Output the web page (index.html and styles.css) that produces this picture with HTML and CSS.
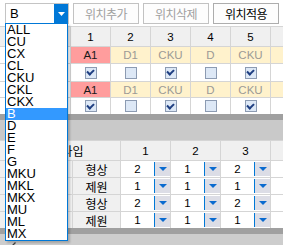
FILE: index.html
```html
<!DOCTYPE html>
<html lang="ko">
<head>
  <meta charset="UTF-8">
  <title>위치 설정</title>
  <link rel="stylesheet" href="styles.css">
</head>
<body>

  <div class="toolbar">
    <div class="combo">
      <span class="combo-text">B</span>
      <span class="combo-btn">
        <svg width="7" height="4" viewBox="0 0 7 4"><path d="M0 0h7L3.5 4z" fill="#fff"/></svg>
      </span>
    </div>
    <button class="btn" disabled>위치추가</button>
    <button class="btn" disabled>위치삭제</button>
    <button class="btn">위치적용</button>
  </div>

  <div class="grid grid-top">
    <div class="c hd"></div>
    <div class="c hd">1</div>
    <div class="c hd">2</div>
    <div class="c hd">3</div>
    <div class="c hd">4</div>
    <div class="c hd">5</div>
    <div class="c hd"></div>

    <div class="c wh"></div>
    <div class="c pink">A1</div>
    <div class="c yel">D1</div>
    <div class="c yel">CKU</div>
    <div class="c yel">D</div>
    <div class="c yel">CKU</div>
    <div class="c yel"></div>

    <div class="c wh"></div>
    <div class="c wh"><span class="chk on"></span></div>
    <div class="c wh"><span class="chk"></span></div>
    <div class="c wh"><span class="chk on"></span></div>
    <div class="c wh"><span class="chk"></span></div>
    <div class="c wh"><span class="chk on"></span></div>
    <div class="c wh"></div>

    <div class="c wh"></div>
    <div class="c pink">A1</div>
    <div class="c yel">D1</div>
    <div class="c yel">CKU</div>
    <div class="c yel">D</div>
    <div class="c yel">CKU</div>
    <div class="c yel"></div>

    <div class="c wh"></div>
    <div class="c wh"><span class="chk on"></span></div>
    <div class="c wh"><span class="chk"></span></div>
    <div class="c wh"><span class="chk on"></span></div>
    <div class="c wh"><span class="chk"></span></div>
    <div class="c wh"><span class="chk on"></span></div>
    <div class="c wh"></div>
  </div>

  <div class="bar-dark"></div>
  <div class="bar-light"></div>

  <div class="grid grid-bot">
    <div class="c hd type-head">타입</div>
    <div class="c hd">1</div>
    <div class="c hd">2</div>
    <div class="c hd">3</div>
    <div class="c hd"></div>

    <div class="c hd"></div>
    <div class="c hd ko">형상</div>
    <div class="val"><span class="num">2</span><span class="dd"></span></div>
    <div class="val"><span class="num">1</span><span class="dd"></span></div>
    <div class="val"><span class="num">2</span><span class="dd"></span></div>
    <div class="c wh"></div>

    <div class="c hd"></div>
    <div class="c hd ko">제원</div>
    <div class="val"><span class="num">1</span><span class="dd"></span></div>
    <div class="val"><span class="num">1</span><span class="dd"></span></div>
    <div class="val"><span class="num">1</span><span class="dd"></span></div>
    <div class="c wh"></div>

    <div class="c hd"></div>
    <div class="c hd ko">형상</div>
    <div class="val"><span class="num">2</span><span class="dd"></span></div>
    <div class="val"><span class="num">1</span><span class="dd"></span></div>
    <div class="val"><span class="num">2</span><span class="dd"></span></div>
    <div class="c wh"></div>

    <div class="c hd"></div>
    <div class="c hd ko">제원</div>
    <div class="val"><span class="num">1</span><span class="dd"></span></div>
    <div class="val"><span class="num">1</span><span class="dd"></span></div>
    <div class="val"><span class="num">1</span><span class="dd"></span></div>
    <div class="c wh"></div>
  </div>

  <div class="bar-dark"></div>
  <div class="scroll">
    <svg width="5" height="4" viewBox="0 0 5 4"><path d="M4.5 0.5L1 4" fill="none" stroke="#404040" stroke-width="1.3"/></svg>
  </div>

  <ul class="dropdown">
    <li>ALL</li>
    <li>CU</li>
    <li>CX</li>
    <li>CL</li>
    <li>CKU</li>
    <li>CKL</li>
    <li>CKX</li>
    <li class="sel">B</li>
    <li>D</li>
    <li>E</li>
    <li>F</li>
    <li>G</li>
    <li>MKU</li>
    <li>MKL</li>
    <li>MKX</li>
    <li>MU</li>
    <li>ML</li>
    <li>MX</li>
  </ul>

</body>
</html>
```

FILE: styles.css
```css
* {
  box-sizing: border-box;
}

body {
  margin: 0;
  width: 283px;
  height: 245px;
  overflow: hidden;
  position: relative;
  background: #fff;
  font-family: "Liberation Sans", Arial, sans-serif;
  color: #000;
}

/* top bar */
.toolbar {
  display: flex;
  align-items: flex-start;
  gap: 4px;
  height: 26px;
  padding: 3px 0 0 5px;
}

.combo {
  display: flex;
  width: 64px;
  height: 21px;
  border: 1px solid #c4c4c4;
  background: #fff;
}

.combo-text {
  flex: 1;
  font-size: 13px;
  line-height: 19px;
  padding-left: 4px;
}

.combo-btn {
  width: 14px;
  background: #0078d7;
  display: flex;
  align-items: center;
  justify-content: center;
}

.btn {
  width: 66px;
  height: 21px;
  padding: 0;
  border: 1px solid #adadad;
  background: #fdfdfd;
  font-family: "Noto Sans CJK KR", sans-serif;
  font-size: 12px;
  letter-spacing: -0.5px;
  color: #000;
}

.btn:disabled {
  color: #a0a0a0;
  border-color: #c2c2c2;
}

/* grids */
.grid {
  display: grid;
  gap: 1px;
  padding-top: 1px;
  background: #d5d5d5;
}

.grid-top {
  grid-template-columns: 70px repeat(5, 39px) 1fr;
  grid-template-rows: 19px 16px 17px 15px 16px;
}

.grid-bot {
  grid-template-columns: 72px 47px repeat(3, 49px) 1fr;
  grid-template-rows: 19px repeat(4, 16px);
}

.c {
  display: flex;
  align-items: center;
  justify-content: center;
  font-size: 11.5px;
}

.hd {
  background: #f0f0f0;
}

.wh {
  background: #fff;
}

.pink {
  background: #ff9d9d;
  color: #1a1a1a;
}

.yel {
  background: #fff2cc;
  color: #9c9a96;
}

.ko {
  font-family: "Noto Sans CJK KR", sans-serif;
  font-size: 12px;
}

.type-head {
  grid-column: span 2;
  padding-left: 25px;
  font-family: "Noto Sans CJK KR", sans-serif;
  font-size: 12px;
}

.chk {
  width: 12px;
  height: 12px;
  border: 1px solid #8c9bb2;
  background: #dde8f6;
  display: flex;
  align-items: center;
  justify-content: center;
}

.chk.on::after {
  content: "";
  width: 5px;
  height: 3px;
  margin-top: -2px;
  border-left: 2px solid #1f3f82;
  border-bottom: 2px solid #1f3f82;
  transform: rotate(-45deg);
}

.val {
  display: flex;
  background: #fff;
}

.num {
  flex: 1;
  text-align: center;
  font-size: 11.5px;
  line-height: 16px;
}

.dd {
  width: 16px;
  margin: 1px 0;
  border-left: 1px solid #0078d7;
  background: #dcdde6;
  display: flex;
  align-items: center;
  justify-content: center;
}

.dd::after {
  content: "";
  border-left: 4px solid transparent;
  border-right: 4px solid transparent;
  border-top: 4px solid #0a6acf;
}

.bar-dark {
  height: 6px;
  background: #a0a0a0;
}

.bar-light {
  height: 20px;
  background: #c9c9c9;
}

.scroll {
  height: 11px;
  overflow: hidden;
  background: #cdcdcd;
  padding: 7px 0 0 11px;
  line-height: 0;
}

/* open combo list */
.dropdown {
  position: absolute;
  left: 5px;
  top: 23px;
  width: 63px;
  height: 218px;
  margin: 0;
  padding: 0;
  list-style: none;
  background: #fff;
  border: 1px solid #0078d7;
  box-shadow: 2px 2px 2px rgba(0, 0, 0, 0.2);
  font-size: 13px;
}

.dropdown li {
  height: 12px;
  line-height: 12px;
  padding-left: 1px;
}

.dropdown li.sel {
  background: #3399ff;
  color: #fff;
}
```
